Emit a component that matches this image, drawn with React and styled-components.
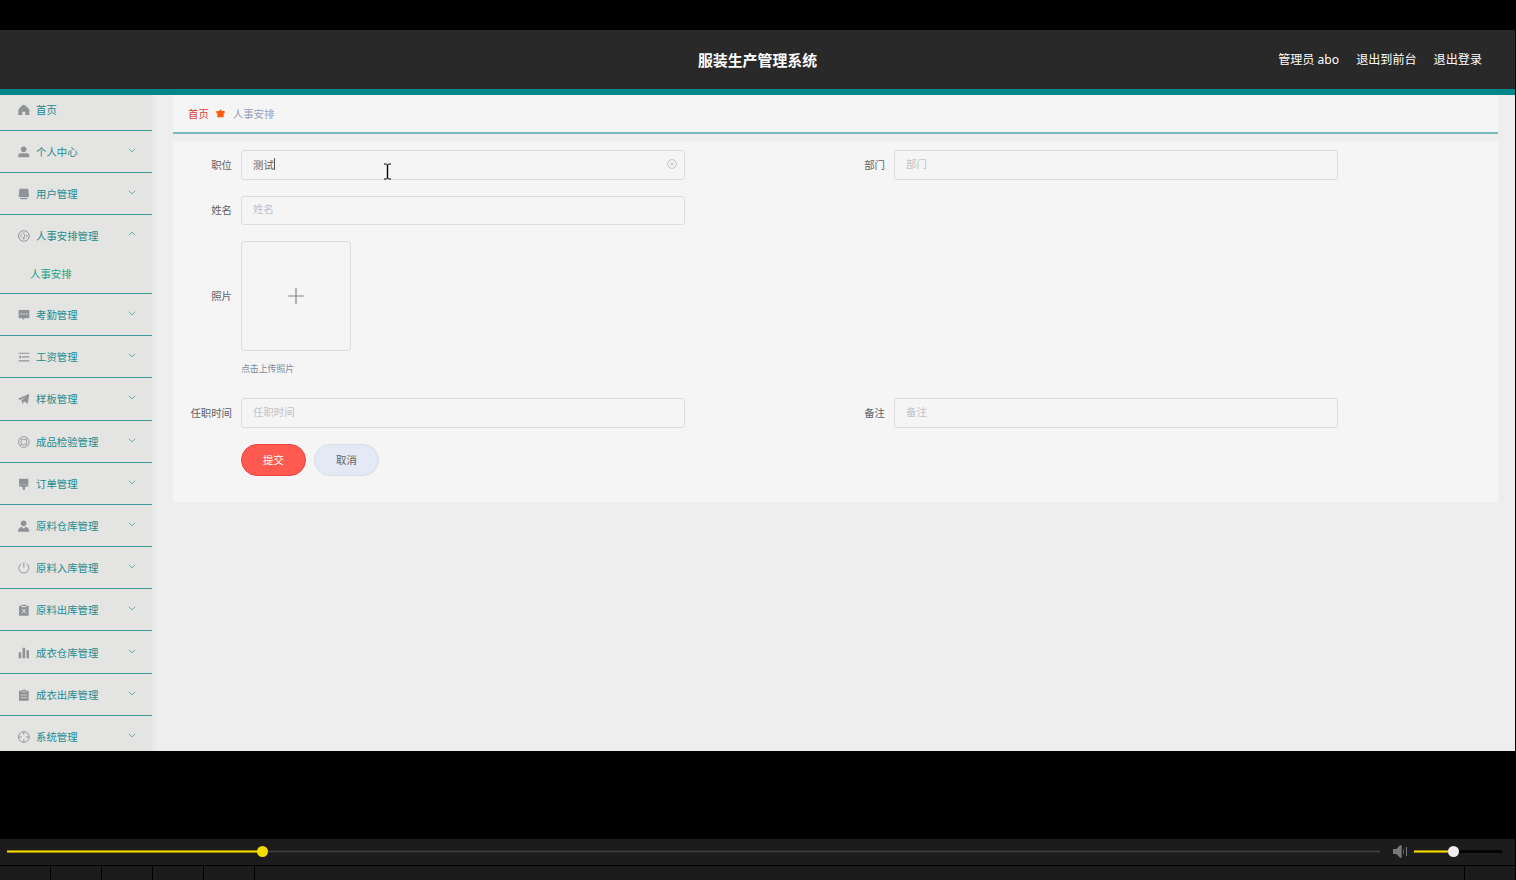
import React from "react";
import { useState } from 'react'
import styled, { createGlobalStyle } from 'styled-components'

const GlobalStyle = createGlobalStyle`
    * { box-sizing: border-box; }
    body {
        margin: 0;
        background: #000;
        overflow: hidden;
        font-family: "Noto Sans", "Noto Sans CJK SC", sans-serif;
        font-size: 10.4px;
    }
`;

const Page = styled.div`
    width: 1516px;
    height: 880px;
    padding-top: 30px;
    display: flex;
    flex-direction: column;
    background: #000;
`;

const Screen = styled.div`
    width: 1515px;
    height: 721px;
    flex: none;
    display: flex;
    flex-direction: column;
    overflow: hidden;
    background: #eee;
`;

const Header = styled.header`
    height: 65px;
    flex: none;
    display: grid;
    grid-template-columns: 1fr auto 1fr;
    align-items: center;
    padding-right: 33px;
    padding-left: 33px;
    background: #292929;
    border-bottom: 6px solid #04878b;
    color: #fff;
`;

const Title = styled.h1`
    grid-column: 2;
    margin: 0;
    font-size: 14.9px;
    line-height: 20px;
    font-weight: 700;
    padding-top: 1px;
`;

const HeaderLinks = styled.nav`
    display: flex;
    justify-content: flex-end;
    gap: 17px;
    font-size: 12.1px;
    line-height: 20px;
    padding-top: 1px;
`;

const Body = styled.div`
    flex: 1;
    min-height: 0;
    display: flex;
`;

const Sidebar = styled.aside`
    width: 156px;
    flex: none;
    overflow: hidden;
    background: #e4e4e3;
    border-right: 4px solid #e9e9e8;
`;

const Menu = styled.ul`
    list-style: none;
    margin: -6.2px 0 0;
    padding: 0;
`;

const MenuItem = styled.li`
    width: 152px;
    border-bottom: 1px solid #3c9899;
    color: #1b8b8d;
`;

const MenuTitle = styled.div`
    height: 41.2px;
    display: flex;
    align-items: center;
    padding: 1px 16px 0 18px;
    cursor: pointer;
    span {
        flex: 1;
        margin-left: 6px;
        line-height: 16px;
        white-space: nowrap;
    }
`;

const SubItem = styled.div`
    height: 36.4px;
    padding-left: 30px;
    line-height: 35px;
    color: #22a584;
`;

const Icon = styled.svg`
    width: 12px;
    height: 12px;
    flex: none;
    color: #8f9296;
`;

const Arrow = styled.svg`
    width: 8px;
    height: 5px;
    margin-bottom: ${props => props.$open ? 5 : 3}px;
    transform: ${props => props.$open ? 'rotate(180deg)' : 'none'};
`;

const Main = styled.main`
    flex: 1;
    padding: 0 17px;
`;

const Breadcrumb = styled.div`
    height: 39px;
    display: flex;
    align-items: center;
    padding: 0 15px 1px;
    background: #f5f5f5;
    border-bottom: 2px solid #7cb9bb;
    color: #97a0b8;
    svg {
        margin: 0 8px 0 7px;
    }
`;

const Home = styled.span`
    color: #dc3f3c;
`;

const Panel = styled.form`
    height: 361px;
    margin-top: 7px;
    padding: 9px 8px 0;
    background: #f5f5f5;
`;

const Row = styled.div`
    display: grid;
    grid-template-columns: 653px 653px;
    margin-bottom: 16px;
`;

const FormItem = styled.div`
    display: flex;
    align-items: center;
`;

const Label = styled.label`
    width: 60px;
    flex: none;
    padding-right: 9px;
    text-align: right;
    white-space: nowrap;
    line-height: 18px;
    color: #606266;
`;

const Field = styled.div`
    width: 444px;
    height: 29.6px;
    display: flex;
    align-items: center;
    padding: 0 7px 0 11px;
    border: 1px solid #dcdcdf;
    border-radius: 3px;
    color: #606266;
`;

const Input = styled.input`
    flex: 1;
    min-width: 0;
    padding: 0 0 2px;
    border: 0;
    outline: 0;
    background: none;
    font: inherit;
    color: inherit;
    &::placeholder {
        color: #bfc2c9;
        opacity: 1;
    }
`;

const Typed = styled.span`
    flex: 1;
    display: flex;
    align-items: center;
    padding-bottom: 1px;
`;

const Caret = styled.i`
    width: 1px;
    height: 12px;
    background: #555;
`;

const ClearIcon = styled.svg`
    width: 10px;
    height: 10px;
    margin-bottom: 1px;
`;

const Upload = styled.div`
    width: 109.5px;
    height: 109.6px;
    display: flex;
    align-items: center;
    justify-content: center;
    border: 1px solid #dcdcdf;
    border-radius: 3px;
`;

const Tip = styled.div`
    height: 47.4px;
    margin-top: -16px;
    padding: 9px 0 0 60px;
    font-size: 8.9px;
    line-height: 18px;
    color: #7d8a99;
`;

const Actions = styled.div`
    display: flex;
    gap: 8px;
    padding-left: 60px;
`;

const Button = styled.button`
    width: 65px;
    height: 32.6px;
    padding: 0 0 1px;
    border: 1px solid ${props => props.$primary ? '#e8453f' : '#dadce0'};
    border-radius: 17px;
    background: ${props => props.$primary ? '#ff5a50' : '#e3eaf5'};
    color: ${props => props.$primary ? '#fff' : '#606266'};
    font: inherit;
`;

const Cursor = styled.svg`
    position: absolute;
    left: 383px;
    top: 163px;
`;

const Player = styled.footer`
    margin-top: 88px;
    display: flex;
    flex-direction: column;
    width: 1515px;
`;

const Controls = styled.div`
    height: 26px;
    display: flex;
    align-items: center;
    padding: 0 13px 1px 7px;
    background: #1c1c1c;
    svg {
        margin: 0 6px 0 13px;
    }
`;

const Track = styled.div`
    position: relative;
    width: ${props => props.$width}px;
    height: 3px;
    flex: none;
    background: ${props => props.$volume ? '#050505' : 'linear-gradient(#252525 1px, #404040 1px 2px, #252525 2px)'};
`;

const Played = styled.div`
    height: 3px;
    background: linear-gradient(#9a8800 1px, #f5dc00 1px 2px, #9a8800 2px);
`;

const Thumb = styled.div`
    position: absolute;
    top: -4px;
    width: 11px;
    height: 11px;
    margin-left: -5px;
    border-radius: 50%;
    background: ${props => props.$volume ? '#eee' : '#f5dc00'};
`;

const Tabs = styled.div`
    height: 15px;
    display: flex;
    border-top: 1px solid #000;
    background: #1c1c1c;
`;

const Tab = styled.div`
    width: ${props => props.$width}px;
    flex: none;
    border-right: 1px solid #000;
`;

// all on a 36 x 36 grid
const icons = {
    home: <path fill="currentColor" d="M17 2Q19 2 21 4L32 14Q34 16 34 18V33H22V23H13V33H1V18Q1 16 3 14L13 4Q15 2 17 2Z" />,
    user: <g fill="currentColor"><circle cx="17" cy="10" r="8.500" /><path d="M1 34V29Q1 22 9 22H26Q34 22 34 29V34Z" /></g>,
    shop: <g fill="currentColor"><path d="M6 2H29Q31 2 31 5L33 24Q33 27 31 27H4Q2 27 2 24L4 5Q4 2 6 2Z" /><path d="M6 29H29V31Q29 34 26 34H9Q6 34 6 31Z" /></g>,
    gauge: <g fill="none" stroke="currentColor" strokeWidth="3"><circle cx="17.500" cy="18" r="16" /><path d="M9 23A10 10 0 0 1 20 9M26 14Q28 18 26 23" strokeWidth="2.200" /><circle cx="17" cy="25" r="2" /><path d="M17.500 23L21 13" /></g>,
    comment: <g><path fill="currentColor" d="M2 3H34V28H20L14 34V28H2Z" /><g fill="#e4e4e3"><circle cx="10" cy="15" r="2.300" /><circle cx="18" cy="15" r="2.300" /><circle cx="26" cy="15" r="2.300" /></g></g>,
    fold: <g fill="currentColor"><path d="M2 5H34V8.500H2ZM12 16H34V19.500H12ZM2 28H34V31.500H2ZM2 18L9 12.500V23.500Z" /></g>,
    plane: <path fill="currentColor" d="M34 2L29 32L18 25L14 34L10 23L25 10L8 21L0 17Z" />,
    help: <g fill="none" stroke="currentColor" strokeWidth="2.600"><circle cx="17.500" cy="18" r="16" /><circle cx="17.500" cy="18" r="9" /><path d="M6 6.500L11 11.500M29 6.500L24 11.500M6 29.500L11 24.500M29 29.500L24 24.500" strokeWidth="3" /></g>,
    brush: <path fill="currentColor" d="M3 2H31V20H3ZM3 21H31V25L21 27V35H14V27L3 25Z" />,
    custom: <g fill="currentColor"><circle cx="17" cy="10" r="8.500" /><path d="M0 35Q0 23 11 20L17 26L23 20Q34 23 34 35Z" /></g>,
    power: <path fill="none" stroke="currentColor" strokeWidth="2.800" d="M17.500 1V17M10 5A15 15 0 1 0 25 5" />,
    release: <g><path fill="currentColor" d="M3 5H11V2H24V5H32V35H3Z" /><path fill="none" stroke="#e4e4e3" strokeWidth="3" d="M10 8H25M12 15L23 27M23 15L12 27" /></g>,
    data: <path fill="currentColor" d="M2 16H9.500V34H2ZM13.500 2H21.500V34H13.500ZM25.500 10H33V34H25.500Z" />,
    order: <g><path fill="currentColor" d="M3 5H11V2H24V5H32V35H3Z" /><path fill="none" stroke="#e4e4e3" strokeWidth="2" d="M10 8H25M8 18H27M8 26H27" /></g>,
    aim: <g fill="none" stroke="currentColor" strokeWidth="2.800"><circle cx="17.500" cy="18" r="16" /><path d="M17.500 2V12M17.500 24V34M1.500 18H11M24 18H34" /></g>,
}

const menu = [
    { name: '首页', icon: 'home', leaf: true },
    { name: '个人中心', icon: 'user' },
    { name: '用户管理', icon: 'shop' },
    { name: '人事安排管理', icon: 'gauge', children: ['人事安排'] },
    { name: '考勤管理', icon: 'comment' },
    { name: '工资管理', icon: 'fold' },
    { name: '样板管理', icon: 'plane' },
    { name: '成品检验管理', icon: 'help' },
    { name: '订单管理', icon: 'brush' },
    { name: '原料仓库管理', icon: 'custom' },
    { name: '原料入库管理', icon: 'power' },
    { name: '原料出库管理', icon: 'release' },
    { name: '成衣仓库管理', icon: 'data' },
    { name: '成衣出库管理', icon: 'order' },
    { name: '系统管理', icon: 'aim' },
]

const TextItem = ({ label }) => (
    <FormItem>
        <Label>{label}</Label>
        <Field><Input placeholder={label} /></Field>
    </FormItem>
)

const App = () => {
    const [opened, setOpened] = useState('人事安排管理')

    return (
        <Page>
            <GlobalStyle />
            <Screen>
                <Header>
                    <Title>服装生产管理系统</Title>
                    <HeaderLinks>
                        <span>管理员 abo</span>
                        <span>退出到前台</span>
                        <span>退出登录</span>
                    </HeaderLinks>
                </Header>
                <Body>
                    <Sidebar>
                        <Menu>
                            {menu.map((el) => {
                                const open = opened === el.name
                                return (
                                    <MenuItem key={el.name}>
                                        <MenuTitle onClick={() => setOpened(open ? '' : el.name)}>
                                            <Icon viewBox="0 0 36 36">{icons[el.icon]}</Icon>
                                            <span>{el.name}</span>
                                            {!el.leaf && (
                                                <Arrow $open={open} viewBox="0 0 8 5">
                                                    <path d="M.8 .8L4 3.900L7.200 .8" fill="none" stroke="#5fa3a3" strokeWidth=".9" />
                                                </Arrow>
                                            )}
                                        </MenuTitle>
                                        {open && el.children && el.children.map((c) => <SubItem key={c}>{c}</SubItem>)}
                                    </MenuItem>
                                )
                            })}
                        </Menu>
                    </Sidebar>
                    <Main>
                        <Breadcrumb>
                            <Home>首页</Home>
                            <svg width="9" height="9" viewBox="0 0 27 27">
                                <path fill="#ff5a0a" d="M13.500 1L18 6H26V13H23V25H4V13H1V6H9Z" />
                            </svg>
                            <span>人事安排</span>
                        </Breadcrumb>
                        <Panel>
                            <Row>
                                <FormItem>
                                    <Label>职位</Label>
                                    <Field>
                                        <Typed>测试<Caret /></Typed>
                                        <ClearIcon viewBox="0 0 30 30" fill="none" stroke="#b9bcc3" strokeWidth="2.800">
                                            <circle cx="15" cy="15" r="13" />
                                            <path d="M10.500 10.500L19.500 19.500M19.500 10.500L10.500 19.500" />
                                        </ClearIcon>
                                    </Field>
                                </FormItem>
                                <TextItem label="部门" />
                            </Row>
                            <Row>
                                <TextItem label="姓名" />
                            </Row>
                            <Row>
                                <FormItem>
                                    <Label>照片</Label>
                                    <Upload>
                                        <svg width="18" height="18" viewBox="0 0 18 18" stroke="#85888c" strokeWidth="1.200">
                                            <path d="M9 1V17M1 9H17" />
                                        </svg>
                                    </Upload>
                                </FormItem>
                            </Row>
                            <Tip>点击上传照片</Tip>
                            <Row>
                                <TextItem label="任职时间" />
                                <TextItem label="备注" />
                            </Row>
                            <Actions>
                                <Button type="button" $primary>提交</Button>
                                <Button type="button">取消</Button>
                            </Actions>
                        </Panel>
                    </Main>
                </Body>
            </Screen>
            <Player>
                <Controls>
                    <Track $width={1373}>
                        <Played style={{ width: 255 }} />
                        <Thumb style={{ left: 255 }} />
                    </Track>
                    <svg width="15" height="13" viewBox="0 0 45 39">
                        <path fill="#777" d="M0 12H10L21 1H26V38H21L10 27H0Z" />
                        <path fill="none" stroke="#555" strokeWidth="3" d="M31.500 12V27" />
                        <path fill="none" stroke="#777" strokeWidth="3" d="M40.500 6V33" />
                    </svg>
                    <Track $width={88} $volume>
                        <Played style={{ width: 39 }} />
                        <Thumb $volume style={{ left: 39 }} />
                    </Track>
                </Controls>
                <Tabs>
                    {[51, 51, 51, 51, 51, 1210].map((w, i) => <Tab key={i} $width={w} />)}
                </Tabs>
            </Player>
            <Cursor width="9" height="17" viewBox="0 0 9 17" fill="none" stroke="#000">
                <path d="M1 1H3.500L4.500 2L5.500 1H8M1 16H3.500L4.500 15L5.500 16H8" />
                <path d="M4.500 2V15" strokeWidth="1.400" />
            </Cursor>
        </Page>
    )
}

export default App
